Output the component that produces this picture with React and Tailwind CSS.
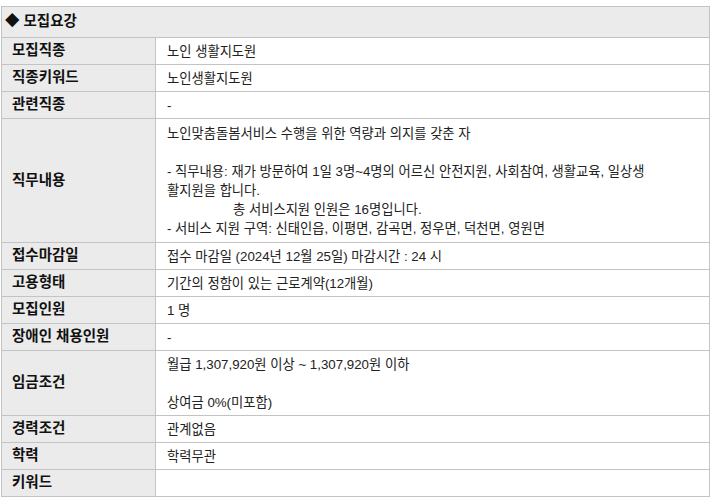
import React from "react";

const rows = [
  { label: "모집직종", lines: ["노인 생활지도원"] },
  { label: "직종키워드", lines: ["노인생활지도원"] },
  { label: "관련직종", lines: ["-"] },
  {
    label: "직무내용",
    tall: true,
    lines: [
      "노인맞춤돌봄서비스 수행을 위한 역량과 의지를 갖춘 자",
      "",
      "- 직무내용: 재가 방문하여 1일 3명~4명의 어르신 안전지원, 사회참여, 생활교육, 일상생",
      "활지원을 합니다.",
      { indent: true, text: "총 서비스지원 인원은 16명입니다." },
      "- 서비스 지원 구역: 신태인읍, 이평면, 감곡면, 정우면, 덕천면, 영원면",
    ],
  },
  { label: "접수마감일", lines: ["접수 마감일 (2024년 12월 25일) 마감시간 : 24 시"] },
  { label: "고용형태", lines: ["기간의 정함이 있는 근로계약(12개월)"] },
  { label: "모집인원", lines: ["1 명"] },
  { label: "장애인 채용인원", lines: ["-"] },
  {
    label: "임금조건",
    lines: ["월급 1,307,920원 이상 ~ 1,307,920원 이하", "", "상여금 0%(미포함)"],
  },
  { label: "경력조건", lines: ["관계없음"] },
  { label: "학력", lines: ["학력무관"] },
  { label: "키워드", lines: [""] },
];

export default function App() {
  return (
    <div
      className="min-h-[504px] w-[718px] bg-white pl-[1px] pt-[6px]"
      style={{ fontFamily: '"Liberation Sans", "Noto Sans CJK KR", sans-serif' }}
    >
      <div className="w-[709px] border border-[#c3c3c3]">
        <div className="flex h-[30px] items-center bg-[#ebebeb] pl-[3px] text-[14.5px] font-bold text-[#111]">
          ◆ 모집요강
        </div>
        {rows.map((r, i) => (
          <div key={i} className="flex border-t border-[#c3c3c3]">
            <div className="flex w-[154px] shrink-0 items-center border-r border-[#c3c3c3] bg-[#ebebeb] pl-[10px] text-[14.5px] font-bold text-[#111]">
              {r.label}
            </div>
            <div
              className={
                r.tall
                  ? "flex-1 px-[11px] py-[4.5px] text-[13.3px] leading-[19px] text-[#222]"
                  : "flex-1 px-[11px] py-[3.5px] text-[13.3px] leading-[19px] text-[#222]"
              }
            >
              {r.lines.map((l, j) =>
                typeof l === "string" ? (
                  <div key={j} className="h-[19px] whitespace-nowrap">
                    {l}
                  </div>
                ) : (
                  <div key={j} className="h-[19px] whitespace-nowrap pl-[66px]">
                    {l.text}
                  </div>
                )
              )}
            </div>
          </div>
        ))}
      </div>
    </div>
  );
}
